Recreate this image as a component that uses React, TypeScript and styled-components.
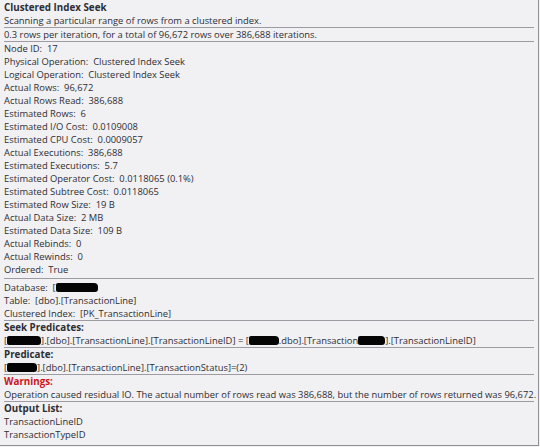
import React from "react";
import styled, { createGlobalStyle } from "styled-components";

const Global = createGlobalStyle`
  html, body { margin: 0; padding: 0; background: #f1f1f4; }
  #root { width: 540px; height: 447px; }
`;

const Tooltip = styled.div`
  box-sizing: border-box;
  width: 539px;
  height: 446px;
  padding: 1px 4px 0 4px;
  background: #f1f1f4;
  border-right: 1px solid #8f8f94;
  border-bottom: 1px solid #8f8f94;
  font-family: "Open Sans", "Noto Sans", sans-serif;
  font-size: 9.4px;
  color: #2e2e33;
  overflow: hidden;
`;

const Row = styled.div<{ $bold?: boolean; $warn?: boolean; $rule?: boolean }>`
  height: 13px;
  line-height: 13px;
  white-space: nowrap;
  font-weight: ${(p) => (p.$bold ? 700 : 400)};
  font-size: ${(p) => (p.$bold ? "9.8px" : "inherit")};
  color: ${(p) => (p.$warn ? "#d0121b" : "inherit")};
  border-bottom: ${(p) => (p.$rule ? "1px solid #9c9ca2" : "none")};
`;

const Section = styled.div<{ $padTop?: number; $padBottom?: number }>`
  padding-top: ${(p) => p.$padTop ?? 0}px;
  padding-bottom: ${(p) => p.$padBottom ?? 0}px;
  border-bottom: 1px solid #9c9ca2;
  &:last-child { border-bottom: none; }
`;

const Redact = styled.span<{ $w: number }>`
  display: inline-block;
  width: ${(p) => p.$w}px;
  height: 9px;
  vertical-align: -1px;
  background: #050505;
  border-radius: 2px 4px 3px 2px;
`;

const props: [string, string][] = [
  ["Node ID", "17"],
  ["Physical Operation", "Clustered Index Seek"],
  ["Logical Operation", "Clustered Index Seek"],
  ["Actual Rows", "96,672"],
  ["Actual Rows Read", "386,688"],
  ["Estimated Rows", "6"],
  ["Estimated I/O Cost", "0.0109008"],
  ["Estimated CPU Cost", "0.0009057"],
  ["Actual Executions", "386,688"],
  ["Estimated Executions", "5.7"],
  ["Estimated Operator Cost", "0.0118065 (0.1%)"],
  ["Estimated Subtree Cost", "0.0118065"],
  ["Estimated Row Size", "19 B"],
  ["Actual Data Size", "2 MB"],
  ["Estimated Data Size", "109 B"],
  ["Actual Rebinds", "0"],
  ["Actual Rewinds", "0"],
  ["Ordered", "True"],
];

export default function App() {
  return (
    <>
      <Global />
      <Tooltip>
        <Row $bold>Clustered Index Seek</Row>
        <Row $rule>Scanning a particular range of rows from a clustered index.</Row>
        <Row $rule>0.3 rows per iteration, for a total of 96,672 rows over 386,688 iterations.</Row>
        <Section $padBottom={2}>
          {props.map(([k, v]) => (
            <Row key={k}>
              {k}:&nbsp; {v}
            </Row>
          ))}
        </Section>
        <Section $padTop={2}>
          <Row>
            Database:&nbsp; [<Redact $w={42} />
          </Row>
          <Row>Table:&nbsp; [dbo].[TransactionLine]</Row>
          <Row>Clustered Index:&nbsp; [PK_TransactionLine]</Row>
        </Section>
        <Section>
          <Row $bold>Seek Predicates:</Row>
          <Row>
            [<Redact $w={34} />].[dbo].[TransactionLine].[TransactionLineID] = [<Redact $w={30} />.dbo].[Transaction<Redact $w={27} />].[TransactionLineID]
          </Row>
        </Section>
        <Section>
          <Row $bold>Predicate:</Row>
          <Row>
            [<Redact $w={30} />].[dbo].[TransactionLine].[TransactionStatus]=(2)
          </Row>
        </Section>
        <Section>
          <Row $bold $warn>Warnings:</Row>
          <Row>
            Operation caused residual IO. The actual number of rows read was 386,688, but the number of rows returned was 96,672.
          </Row>
        </Section>
        <Section>
          <Row $bold>Output List:</Row>
          <Row>TransactionLineID</Row>
          <Row>TransactionTypeID</Row>
        </Section>
      </Tooltip>
    </>
  );
}
